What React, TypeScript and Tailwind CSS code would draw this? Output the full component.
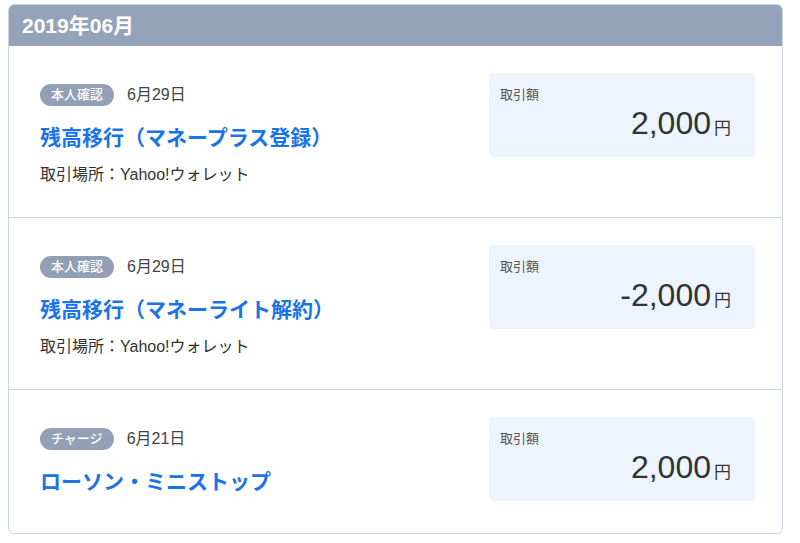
import React from 'react'

type Tx = {
  badge: string
  date: string
  title: string
  place?: string
  amount: string
}

const rows: Tx[] = [
  { badge: '本人確認', date: '6月29日', title: '残高移行（マネープラス登録）', place: 'Yahoo!ウォレット', amount: '2,000' },
  { badge: '本人確認', date: '6月29日', title: '残高移行（マネーライト解約）', place: 'Yahoo!ウォレット', amount: '-2,000' },
  { badge: 'チャージ', date: '6月21日', title: 'ローソン・ミニストップ', amount: '2,000' },
]

export default function App() {
  return (
    <div
      className="bg-white pt-[4px] px-[8px]"
      style={{ fontFamily: '"Liberation Sans", "Noto Sans CJK JP", sans-serif' }}
    >
      <div className="border border-[#c9d4e2] rounded-[6px] overflow-hidden w-[775px]">
        <div className="bg-[#94a3b9] h-[41px] flex items-center px-[13px]">
          <span className="text-white font-bold text-[21px]">2019年06月</span>
        </div>
        {rows.map((r, i) => (
          <div
            key={i}
            className={`flex items-start justify-between pl-[31px] pr-[27px] pt-[27px] ${r.place ? 'pb-[32px]' : 'pb-[32px]'} ${i > 0 ? 'border-t border-[#c9d4e2]' : ''}`}
          >
            <div className="pt-[10px]">
              <div className="flex items-center gap-[13px]">
                <span className="bg-[#929fb5] text-white text-[13px] font-medium rounded-full h-[22px] px-[11px] flex items-center">
                  {r.badge}
                </span>
                <span className="text-[16px] text-[#444]">{r.date}</span>
              </div>
              <div className="mt-[17px] text-[21px] font-bold text-[#1a73e8] leading-[28px]">{r.title}</div>
              {r.place && (
                <div className="mt-[13px] text-[16px] text-[#333] leading-[20px]">取引場所：{r.place}</div>
              )}
            </div>
            <div className="bg-[#edf4fe] rounded-[4px] w-[266px] h-[84px] pl-[11px] pr-[24px] pt-[14px]">
              <div className="text-[13px] text-[#555] leading-[16px]">取引額</div>
              <div className="flex items-baseline justify-end mt-[1px]">
                <span className="text-[32px] text-[#333] leading-[38px]">{r.amount}</span>
                <span className="text-[17px] text-[#333] ml-[3px]">円</span>
              </div>
            </div>
          </div>
        ))}
      </div>
    </div>
  )
}
